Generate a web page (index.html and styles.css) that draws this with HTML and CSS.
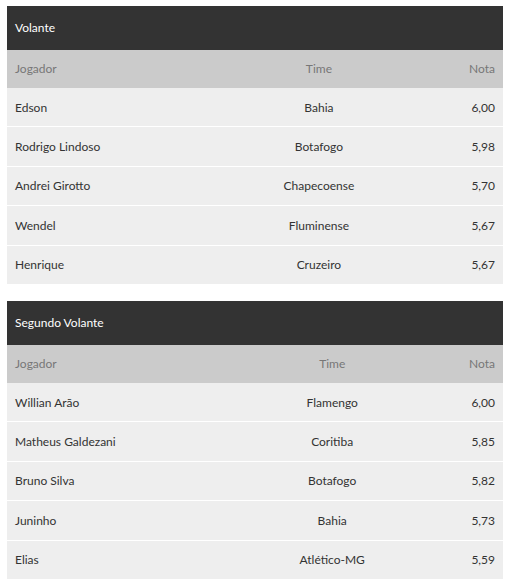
FILE: index.html
```html
<!DOCTYPE html>
<html lang="pt">
<head>
<meta charset="utf-8">
<link rel="stylesheet" href="styles.css">
</head>
<body>
<div class="page">
  <table class="ranking">
    <thead>
      <tr class="title"><th colspan="3">Volante</th></tr>
      <tr class="head"><th class="c1">Jogador</th><th class="c2">Time</th><th class="c3">Nota</th></tr>
    </thead>
    <tbody>
      <tr><td class="c1">Edson</td><td class="c2">Bahia</td><td class="c3">6,00</td></tr>
      <tr><td class="c1">Rodrigo Lindoso</td><td class="c2">Botafogo</td><td class="c3">5,98</td></tr>
      <tr><td class="c1">Andrei Girotto</td><td class="c2">Chapecoense</td><td class="c3">5,70</td></tr>
      <tr><td class="c1">Wendel</td><td class="c2">Fluminense</td><td class="c3">5,67</td></tr>
      <tr><td class="c1">Henrique</td><td class="c2">Cruzeiro</td><td class="c3">5,67</td></tr>
    </tbody>
  </table>
  <table class="ranking">
    <thead>
      <tr class="title"><th colspan="3">Segundo Volante</th></tr>
      <tr class="head"><th class="c1">Jogador</th><th class="c2">Time</th><th class="c3">Nota</th></tr>
    </thead>
    <tbody>
      <tr><td class="c1">Willian Arão</td><td class="c2">Flamengo</td><td class="c3">6,00</td></tr>
      <tr><td class="c1">Matheus Galdezani</td><td class="c2">Coritiba</td><td class="c3">5,85</td></tr>
      <tr><td class="c1">Bruno Silva</td><td class="c2">Botafogo</td><td class="c3">5,82</td></tr>
      <tr><td class="c1">Juninho</td><td class="c2">Bahia</td><td class="c3">5,73</td></tr>
      <tr><td class="c1">Elias</td><td class="c2">Atlético-MG</td><td class="c3">5,59</td></tr>
    </tbody>
  </table>
</div>
</body>
</html>
```

FILE: styles.css
```css
html, body {
  margin: 0;
  padding: 0;
  background: #ffffff;
}
body {
  font-family: Lato, "Open Sans", sans-serif;
  font-size: 12px;
  line-height: 17.4px;
  color: #333333;
}
.page {
  padding: 6px 7px;
  display: flex;
  flex-direction: column;
  gap: 16px;
}
.ranking {
  width: 496px;
  border-collapse: separate;
  border-spacing: 0;
}
.ranking th,
.ranking td {
  padding: 0 8px;
  font-weight: normal;
  white-space: nowrap;
}
.title th {
  background: #333333;
  color: #ffffff;
  height: 44px;
  text-align: left;
}
.head th {
  background: #cbcbcb;
  color: #777777;
  height: 38px;
}
.ranking tbody td {
  background: #eeeeee;
  padding-top: 10.5px;
  padding-bottom: 10.5px;
  border-bottom: 1px solid #ffffff;
}
.c1 { text-align: left; }
.c2 { text-align: center; }
.c3 { text-align: right; }
```
